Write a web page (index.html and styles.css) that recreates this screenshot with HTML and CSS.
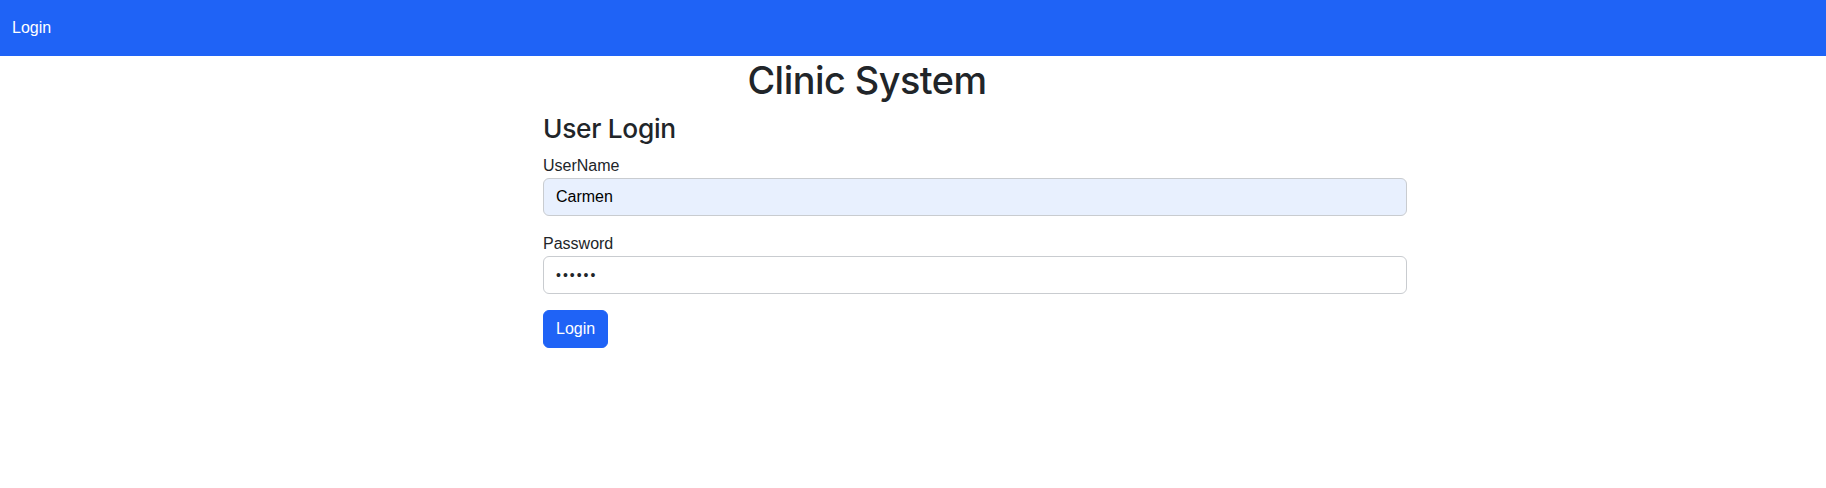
FILE: index.html
```html
<!DOCTYPE html>
<html lang="en">
<head>
<meta charset="utf-8">
<title>Clinic System - Login</title>
<link rel="stylesheet" href="styles.css">
</head>
<body>
<nav class="navbar">
  <a class="nav-link" href="#">Login</a>
</nav>
<header class="title-row">
  <h1 class="title">Clinic System</h1>
</header>
<main class="page">
  <form class="login-form">
    <h3 class="form-title">User Login</h3>
    <div class="field">
      <label class="form-label" for="username">UserName</label>
      <input class="form-control autofilled" id="username" type="text" value="Carmen">
    </div>
    <div class="field">
      <label class="form-label" for="password">Password</label>
      <input class="form-control" id="password" type="password" value="123456">
    </div>
    <button class="btn-primary" type="button">Login</button>
  </form>
</main>
</body>
</html>
```

FILE: styles.css
```css
* { box-sizing: border-box; }

html, body {
  margin: 0;
  padding: 0;
  background: #ffffff;
  color: #212529;
  font-family: "Liberation Sans", Arial, sans-serif;
  font-size: 16px;
  line-height: 1.5;
}

.navbar {
  display: flex;
  align-items: center;
  height: 56px;
  padding: 8px 12px;
  background: #1f63f6;
}

.nav-link {
  display: block;
  padding: 8px 0;
  color: #ffffff;
  text-decoration: none;
  font-size: 16px;
  line-height: 24px;
}

.title-row {
  display: flex;
  justify-content: center;
  padding-right: 92px;
}

.title {
  margin: 0 0 8px 0;
  font-family: Inter, "Liberation Sans", Arial, sans-serif;
  font-size: 37.8px;
  font-weight: 500;
  letter-spacing: -0.5px;
  line-height: 48px;
  color: #212529;
}

.page {
  padding-left: 543px;
}

.login-form {
  width: 864px;
  display: flex;
  flex-direction: column;
  align-items: flex-start;
}

.form-title {
  margin: 0 0 8px 0;
  font-family: Inter, "Liberation Sans", Arial, sans-serif;
  font-size: 26.3px;
  font-weight: 500;
  letter-spacing: -0.3px;
  line-height: 33.6px;
  color: #212529;
}

.field {
  width: 100%;
  margin-bottom: 16px;
  display: flex;
  flex-direction: column;
}

.form-label {
  display: block;
  font-size: 16px;
  line-height: 24px;
  margin-bottom: 0;
  color: #212529;
}

.form-control {
  display: block;
  width: 100%;
  height: 38px;
  padding: 6px 12px;
  font-family: "Liberation Sans", Arial, sans-serif;
  font-size: 16px;
  line-height: 24px;
  color: #212529;
  background: #ffffff;
  border: 1px solid #c9ccd0;
  border-radius: 6px;
  outline: none;
}

.form-control.autofilled {
  background: #e8f0fe;
  color: #000000;
}

#password {
  letter-spacing: 2px;
  font-size: 14px;
}

.btn-primary {
  height: 38px;
  padding: 6px 12px;
  font-family: "Liberation Sans", Arial, sans-serif;
  font-size: 16px;
  line-height: 24px;
  color: #ffffff;
  background: #1f63f6;
  border: 1px solid #1f63f6;
  border-radius: 6px;
  cursor: pointer;
}
```
